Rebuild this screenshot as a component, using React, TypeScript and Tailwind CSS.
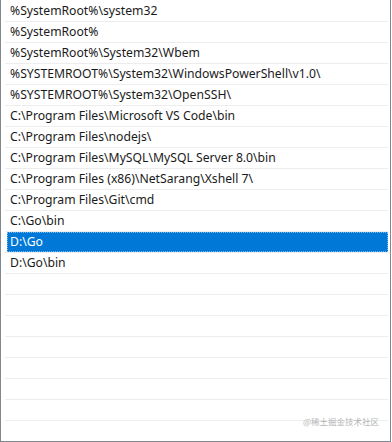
const paths = [
  '%SystemRoot%\\system32',
  '%SystemRoot%',
  '%SystemRoot%\\System32\\Wbem',
  '%SYSTEMROOT%\\System32\\WindowsPowerShell\\v1.0\\',
  '%SYSTEMROOT%\\System32\\OpenSSH\\',
  'C:\\Program Files\\Microsoft VS Code\\bin',
  'C:\\Program Files\\nodejs\\',
  'C:\\Program Files\\MySQL\\MySQL Server 8.0\\bin',
  'C:\\Program Files (x86)\\NetSarang\\Xshell 7\\',
  'C:\\Program Files\\Git\\cmd',
  'C:\\Go\\bin',
  'D:\\Go',
  'D:\\Go\\bin',
];

const selected = 11;
const totalRows = 21;

export default function App() {
  const rows = Array.from({ length: totalRows }, (_, i) => paths[i] ?? '');

  return (
    <div className="relative w-[391px] h-[442px] bg-white border-l border-r border-b border-[#82878f] overflow-hidden">
      <div className="pt-[1px] flex flex-col">
        {rows.map((text, i) => (
          <div key={i} className="h-[21px] ml-[4px] mr-[2px] border-b border-[#ededed] flex">
            <div
              className={
                i === selected
                  ? 'ml-[2px] flex-1 flex items-center pl-[3px] bg-[#0078d7] text-white outline outline-1 outline-dotted outline-[#7db8ea] -outline-offset-1'
                  : 'ml-[2px] flex-1 flex items-center pl-[3px] text-[#1a1a1a]'
              }
            >
              <span className="text-[12.2px] leading-none whitespace-nowrap font-['Noto_Sans',sans-serif]">
                {text}
              </span>
            </div>
          </div>
        ))}
      </div>

      {/* watermark */}
      <div className="absolute right-[11px] bottom-[13px] text-[8.5px] text-[#b5b5b5] font-['Noto_Sans_CJK_SC',sans-serif]">
        @稀土掘金技术社区
      </div>
    </div>
  );
}
